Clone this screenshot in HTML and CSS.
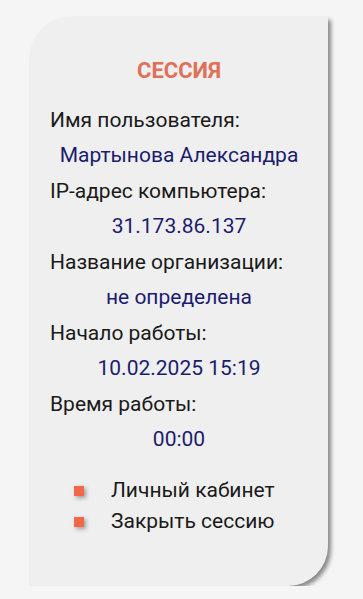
FILE: index.html
```html
<!DOCTYPE html>
<html lang="ru">
<head>
<meta charset="utf-8">
<link rel="stylesheet" href="styles.css">
</head>
<body>
<div class="card">
  <h2 class="title">СЕССИЯ</h2>
  <dl class="info">
    <dt>Имя пользователя:</dt>
    <dd>Мартынова Александра</dd>
    <dt>IP-адрес компьютера:</dt>
    <dd>31.173.86.137</dd>
    <dt>Название организации:</dt>
    <dd>не определена</dd>
    <dt>Начало работы:</dt>
    <dd>10.02.2025 15:19</dd>
    <dt>Время работы:</dt>
    <dd>00:00</dd>
  </dl>
  <ul class="links">
    <li><span class="bullet"></span>Личный кабинет</li>
    <li><span class="bullet"></span>Закрыть сессию</li>
  </ul>
</div>
</body>
</html>
```
FILE: styles.css
```css
html, body {
  margin: 0;
  padding: 0;
  background: #f5f5f5;
  font-family: Roboto, "Liberation Sans", sans-serif;
}
body {
  padding: 17px 0 0 30px;
}
.card {
  box-sizing: border-box;
  width: 298px;
  height: 569px;
  background: #efefef;
  border-radius: 40px 0 40px 0;
  box-shadow: 3px 3px 4px rgba(0, 0, 0, 0.45);
  padding: 41px 0 0 20px;
}
.title {
  margin: 0 20px 0 0;
  text-align: center;
  color: #e07158;
  font-size: 22px;
  font-weight: 700;
  line-height: 26px;
}
.info {
  margin: 18px 0 0 0;
  padding: 0;
}
.info dt {
  margin: 0;
  font-size: 21px;
  line-height: 36px;
  color: #1a1a1a;
}
.info dd {
  margin: 0 0 0 -20px;
  text-align: center;
  font-size: 21px;
  line-height: 35px;
  color: #1c1c6e;
}
.links {
  list-style: none;
  margin: 18px 0 0 0;
  padding: 0 0 0 24px;
}
.links li {
  display: flex;
  align-items: center;
  font-size: 21px;
  line-height: 31px;
  color: #1a1a1a;
}
.bullet {
  width: 10px;
  height: 10px;
  margin-right: 27px;
  background: #f2674a;
  box-shadow: 2px 2px 4px rgba(0, 0, 0, 0.35);
}
```
